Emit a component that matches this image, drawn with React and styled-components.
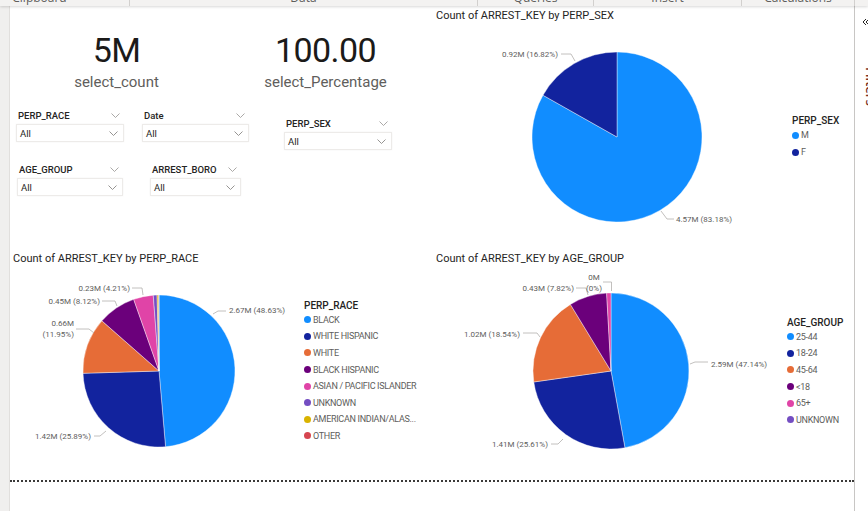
import React from 'react';
import styled, { createGlobalStyle } from 'styled-components';

const GlobalStyle = createGlobalStyle`
  html, body {
    margin: 0;
    padding: 0;
    background: #fff;
  }
  body {
    font-family: Roboto, "Liberation Sans", sans-serif;
    overflow: hidden;
  }
`;

const Shell = styled.div`
  width: 868px;
  height: 511px;
  display: flex;
  flex-direction: column;
  overflow: hidden;
  background: #fff;
`;

const Ribbon = styled.div`
  height: 6px;
  flex: none;
  display: flex;
  background: #f3f2f1;
  overflow: hidden;
  box-shadow: 0 1px 3px rgba(0, 0, 0, 0.16);
  position: relative;
  z-index: 1;
`;

const RibbonGroup = styled.div`
  width: ${p => p.$w}px;
  flex: none;
  display: flex;
  justify-content: center;
  padding-right: ${p => p.$pr || 0}px;
  box-sizing: border-box;
  border-right: 1px solid #d2d0ce;
`;

const RibbonLabel = styled.span`
  font-family: "Open Sans", sans-serif;
  font-size: 12px;
  line-height: 12px;
  color: #605e5c;
  margin-top: -8px;
`;

const Body = styled.div`
  flex: 1;
  display: flex;
  min-height: 0;
`;

const Rail = styled.div`
  width: 9px;
  flex: none;
  background: #f0efee;
  border-right: 1px solid #e1dfdd;
`;

const Canvas = styled.div`
  width: 844px;
  flex: none;
  display: flex;
  flex-direction: column;
  background: #fff;
`;

const Divider = styled.div`
  width: 1px;
  flex: none;
  background: #c8c6c4;
`;

const FilterPane = styled.div`
  flex: 1;
  overflow: hidden;
  display: flex;
  flex-direction: column;
  align-items: flex-start;
  padding: 12px 0 0 7px;
  gap: 41px;
`;

const FilterText = styled.span`
  writing-mode: vertical-rl;
  font-family: "Open Sans", sans-serif;
  font-size: 13px;
  font-weight: 600;
  color: #7a2e1f;
`;

const Row = styled.div`
  height: ${p => p.$h}px;
  flex: none;
  display: grid;
  grid-template-columns: 420px 1fr;
`;

const PageEdge = styled.div`
  margin-top: 25px;
  border-top: 2px dotted #3b3a39;
`;

/* left-top: cards + slicers */
const LeftTop = styled.div`
  display: flex;
  flex-direction: column;
`;

const KpiRow = styled.div`
  display: flex;
  padding: 26px 0 0 2px;
`;

const Card = styled.div`
  width: 210px;
  display: flex;
  flex-direction: column;
  align-items: center;
`;

const CardValue = styled.div`
  font-family: Roboto, sans-serif;
  font-size: 34px;
  line-height: 36px;
  letter-spacing: -0.6px;
  color: #1b1a19;
`;

const CardLabel = styled.div`
  margin-top: 4px;
  font-family: Roboto, sans-serif;
  font-size: 15px;
  line-height: 20px;
  color: #605e5c;
`;

const SlicerArea = styled.div`
  margin-top: 16px;
  display: flex;
  flex-direction: column;
  gap: 12px;
`;

const SlicerRow = styled.div`
  display: flex;
  align-items: flex-start;
`;

const SlicerBox = styled.div`
  width: ${p => p.$w}px;
  margin-left: ${p => p.$ml}px;
  margin-top: ${p => p.$mt || 0}px;
  display: flex;
  flex-direction: column;
`;

const SlicerHeader = styled.div`
  height: 14px;
  display: flex;
  align-items: center;
  justify-content: space-between;
  padding: 0 4px 0 2px;
`;

const SlicerLabel = styled.span`
  font-size: 9.5px;
  font-weight: 500;
  color: #252423;
`;

const Dropdown = styled.div`
  margin-top: 2px;
  height: 18px;
  box-sizing: border-box;
  border: 1px solid #edebe9;
  box-shadow: 0 0 2px rgba(0, 0, 0, 0.05);
  display: flex;
  align-items: center;
  justify-content: space-between;
  padding: 0 5px 0 3px;
  font-size: 9.5px;
  color: #252423;
`;

/* visuals */
const Visual = styled.div`
  display: flex;
  flex-direction: column;
  padding: ${p => p.$pt}px 0 0 ${p => p.$pl}px;
`;

const VisualTitle = styled.div`
  height: 14px;
  font-size: 11px;
  line-height: 14px;
  color: #252423;
  white-space: nowrap;
`;

const PlotRow = styled.div`
  display: flex;
  align-items: flex-start;
`;

const Legend = styled.div`
  margin-top: ${p => p.$top}px;
  display: flex;
  flex-direction: column;
`;

const LegendTitle = styled.div`
  font-size: 10px;
  font-weight: 500;
  line-height: 13px;
  color: #252423;
`;

const LegendItem = styled.div`
  height: ${p => p.$h}px;
  display: flex;
  align-items: center;
  gap: 2px;
  font-size: 9px;
  letter-spacing: -0.3px;
  color: #605e5c;
  white-space: nowrap;
`;

const Dot = styled.span`
  width: 7px;
  height: 7px;
  border-radius: 50%;
  background: ${p => p.$c};
  flex: none;
`;

const C = {
  blue: '#118DFF',
  navy: '#12239E',
  orange: '#E66C37',
  purple: '#6B007B',
  pink: '#E044A7',
  violet: '#744EC2',
  gold: '#D9B300',
  red: '#D64550',
};

function Chevron({ color = '#605e5c' }) {
  return (
    <svg width="9" height="5" viewBox="0 0 9 5">
      <polyline points="0.5,0.5 4.5,4.5 8.5,0.5" fill="none" stroke={color} strokeWidth="0.9" />
    </svg>
  );
}

function Slicer({ label, w, ml, mt }) {
  return (
    <SlicerBox $w={w} $ml={ml} $mt={mt}>
      <SlicerHeader>
        <SlicerLabel>{label}</SlicerLabel>
        <Chevron color="#a19f9d" />
      </SlicerHeader>
      <Dropdown>
        <span>All</span>
        <Chevron color="#8a8886" />
      </Dropdown>
    </SlicerBox>
  );
}

function polar(cx, cy, r, deg) {
  const a = (deg * Math.PI) / 180;
  return [cx + r * Math.sin(a), cy - r * Math.cos(a)];
}

function Pie({ box, cx, cy, r, slices, labels }) {
  const [x, y, w, h] = box;
  let acc = 0;
  const total = slices.reduce((s, d) => s + d.v, 0);
  return (
    <svg width={w} height={h} viewBox={`${x} ${y} ${w} ${h}`} style={{ flex: 'none' }}>
      {slices.map(s => {
        const a0 = (acc / total) * 360;
        acc += s.v;
        const a1 = (acc / total) * 360;
        if (a1 - a0 < 0.01) return null;
        const [x0, y0] = polar(cx, cy, r, a0);
        const [x1, y1] = polar(cx, cy, r, a1);
        const large = a1 - a0 > 180 ? 1 : 0;
        return (
          <path
            key={s.name}
            d={`M${cx},${cy} L${x0},${y0} A${r},${r} 0 ${large} 1 ${x1},${y1} Z`}
            fill={s.c}
            stroke="#fff"
            strokeWidth="0.4"
          />
        );
      })}
      {labels.map((l, i) => (
        <g key={i}>
          <polyline points={l.pts.map(p => p.join(',')).join(' ')} fill="none" stroke="#b3b0ad" strokeWidth="0.8" />
          <text x={l.x} y={l.y} textAnchor={l.anchor} fontSize="8" fill="#605e5c" fontFamily="Roboto, sans-serif">
            {l.lines.map((t, j) => (
              <tspan key={j} x={l.x} dy={j === 0 ? 3 : 11}>{t}</tspan>
            ))}
          </text>
        </g>
      ))}
    </svg>
  );
}

function ChartLegend({ title, items, top, pitch }) {
  return (
    <Legend $top={top}>
      <LegendTitle>{title}</LegendTitle>
      {items.map(it => (
        <LegendItem key={it.name} $h={pitch}>
          <Dot $c={it.c} />
          {it.name}
        </LegendItem>
      ))}
    </Legend>
  );
}

const sexData = [
  { name: 'M', v: 83.18, c: C.blue },
  { name: 'F', v: 16.82, c: C.navy },
];

const sexLabels = [
  { lines: ['0.92M (16.82%)'], x: 558, y: 54, anchor: 'end', pts: [[561, 54], [571, 54], [575, 61]] },
  { lines: ['4.57M (83.18%)'], x: 676, y: 219, anchor: 'start', pts: [[661, 211], [667, 219], [674, 219]] },
];

const raceData = [
  { name: 'BLACK', v: 48.63, c: C.blue },
  { name: 'WHITE HISPANIC', v: 25.89, c: C.navy },
  { name: 'WHITE', v: 11.95, c: C.orange },
  { name: 'BLACK HISPANIC', v: 8.12, c: C.purple },
  { name: 'ASIAN / PACIFIC ISLANDER', v: 4.21, c: C.pink },
  { name: 'UNKNOWN', v: 0.8, c: C.violet },
  { name: 'AMERICAN INDIAN/ALAS...', v: 0.33, c: C.gold },
  { name: 'OTHER', v: 0.07, c: C.red },
];

const raceLabels = [
  { lines: ['2.67M (48.63%)'], x: 229, y: 310, anchor: 'start', pts: [[213, 314], [218, 311], [226, 311]] },
  { lines: ['0.23M (4.21%)'], x: 130, y: 288, anchor: 'end', pts: [[132, 288], [142, 288], [143, 295]] },
  { lines: ['0.45M (8.12%)'], x: 100, y: 301, anchor: 'end', pts: [[102, 301], [115, 301], [117, 306]] },
  { lines: ['0.66M', '(11.95%)'], x: 74, y: 323, anchor: 'end', pts: [[76, 329], [89, 329], [94, 333]] },
  { lines: ['1.42M (25.89%)'], x: 91, y: 436, anchor: 'end', pts: [[94, 436], [100, 436], [106, 431]] },
];

const ageData = [
  { name: '25-44', v: 47.14, c: C.blue },
  { name: '18-24', v: 25.61, c: C.navy },
  { name: '45-64', v: 18.54, c: C.orange },
  { name: '<18', v: 7.82, c: C.purple },
  { name: '65+', v: 0.89, c: C.pink },
  { name: 'UNKNOWN', v: 0, c: C.violet },
];

const ageLabels = [
  { lines: ['2.59M (47.14%)'], x: 711, y: 364, anchor: 'start', pts: [[690, 364], [695, 362], [708, 362]] },
  { lines: ['1.02M (18.54%)'], x: 520, y: 334, anchor: 'end', pts: [[523, 333], [537, 333], [540, 337]] },
  { lines: ['0.43M (7.82%)'], x: 574, y: 288, anchor: 'end', pts: [[576, 288], [586, 288], [588, 295]] },
  { lines: ['0M', '(0%)'], x: 594, y: 277, anchor: 'middle', pts: [[603, 282], [611.5, 282], [611.5, 291]] },
  { lines: ['1.41M (25.61%)'], x: 548, y: 444, anchor: 'end', pts: [[551, 444], [558, 444], [563, 439]] },
];

export default function App() {
  return (
    <Shell>
      <GlobalStyle />
      <Ribbon>
        <RibbonGroup $w={130} $pr={50}><RibbonLabel>Clipboard</RibbonLabel></RibbonGroup>
        <RibbonGroup $w={348}><RibbonLabel>Data</RibbonLabel></RibbonGroup>
        <RibbonGroup $w={116}><RibbonLabel>Queries</RibbonLabel></RibbonGroup>
        <RibbonGroup $w={148}><RibbonLabel>Insert</RibbonLabel></RibbonGroup>
        <RibbonGroup $w={113}><RibbonLabel>Calculations</RibbonLabel></RibbonGroup>
      </Ribbon>
      <Body>
        <Rail />
        <Canvas>
          <Row $h={239}>
            <LeftTop>
              <KpiRow>
                <Card>
                  <CardValue>5M</CardValue>
                  <CardLabel>select_count</CardLabel>
                </Card>
                <Card>
                  <CardValue>100.00</CardValue>
                  <CardLabel>select_Percentage</CardLabel>
                </Card>
              </KpiRow>
              <SlicerArea>
                <SlicerRow>
                  <Slicer label="PERP_RACE" w={108} ml={6} />
                  <Slicer label="Date" w={107} ml={18} />
                  <Slicer label="PERP_SEX" w={108} ml={35} mt={8} />
                </SlicerRow>
                <SlicerRow>
                  <Slicer label="AGE_GROUP" w={106} ml={7} />
                  <Slicer label="ARREST_BORO" w={91} ml={27} />
                </SlicerRow>
              </SlicerArea>
            </LeftTop>
            <Visual $pt={3} $pl={6}>
              <VisualTitle>Count of ARREST_KEY by PERP_SEX</VisualTitle>
              <PlotRow>
                <Pie box={[436, 23, 356, 222]} cx={617} cy={137} r={85} slices={sexData} labels={sexLabels} />
                <ChartLegend title="PERP_SEX" items={sexData} top={90.5} pitch={17} />
              </PlotRow>
            </Visual>
          </Row>
          <Row $h={210}>
            <Visual $pt={7} $pl={3}>
              <VisualTitle>Count of ARREST_KEY by PERP_RACE</VisualTitle>
              <PlotRow>
                <Pie box={[13, 266, 291, 189]} cx={159} cy={371} r={76} slices={raceData} labels={raceLabels} />
                <ChartLegend title="PERP_RACE" items={raceData} top={32.5} pitch={16.6} />
              </PlotRow>
            </Visual>
            <Visual $pt={7} $pl={6}>
              <VisualTitle>Count of ARREST_KEY by AGE_GROUP</VisualTitle>
              <PlotRow>
                <Pie box={[436, 266, 351, 189]} cx={611} cy={371} r={78} slices={ageData} labels={ageLabels} />
                <ChartLegend title="AGE_GROUP" items={ageData} top={49.5} pitch={16.6} />
              </PlotRow>
            </Visual>
          </Row>
          <PageEdge />
        </Canvas>
        <Divider />
        <FilterPane>
          <svg width="8" height="8" viewBox="0 0 8 8">
            <polyline points="4,1 1,4 4,7" fill="none" stroke="#252423" strokeWidth="1" />
            <polyline points="7,1 4,4 7,7" fill="none" stroke="#252423" strokeWidth="1" />
          </svg>
          <FilterText>Filters</FilterText>
        </FilterPane>
      </Body>
    </Shell>
  );
}
